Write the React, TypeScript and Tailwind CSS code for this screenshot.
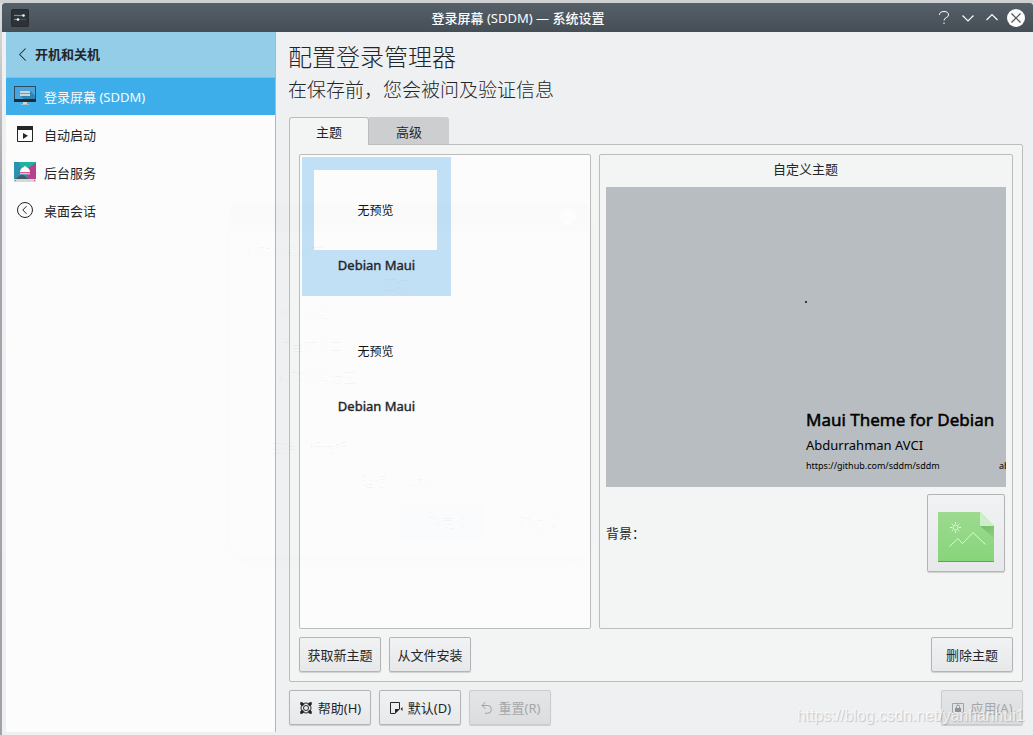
import React from 'react';
import { ChevronLeft } from 'lucide-react';

interface NavItem {
  label: string;
  icon: React.ReactNode;
  active?: boolean;
}

interface KButtonProps {
  children: React.ReactNode;
  className: string;
  icon?: React.ReactNode;
  disabled?: boolean;
}

const MonitorIcon = () => (
  <svg width="22" height="22" viewBox="0 0 22 22" shapeRendering="crispEdges">
    <rect x="0" y="0" width="22" height="16" fill="#34495a" />
    <rect x="1" y="1" width="20" height="12" fill="#45a5dc" />
    <path d="M16 5l5 5v3H9l-3-3z" fill="#3284b4" />
    <rect x="0" y="13" width="22" height="3" fill="#232b30" />
    <rect x="6" y="5" width="10" height="2" fill="#c9d6dd" />
    <rect x="6" y="7" width="10" height="1" fill="#7d99a8" />
    <rect x="6" y="8" width="10" height="2" fill="#c9d6dd" />
    <rect x="9" y="16" width="4" height="2" fill="#cfd5d8" />
    <rect x="7" y="18" width="8" height="1" fill="#a9bfcb" />
  </svg>
);

const AutostartIcon = () => (
  <svg width="22" height="22" viewBox="0 0 22 22">
    <path d="M3.5 2.5h15v15h-15z" fill="none" stroke="#232629" />
    <path d="M3 2h16v4H3z" fill="#232629" />
    <path d="M9 9l5 2.8L9 15z" fill="#232629" />
  </svg>
);

const ServicesIcon = () => (
  <svg width="22" height="22" viewBox="0 0 22 22">
    <path d="M0 0h22v18H0z" fill="#2b93b0" />
    <path d="M5 0h17L9 11z" fill="#1fb3a0" />
    <path d="M22 1v17H15L11 8z" fill="#b5428c" />
    <path d="M0 18l8-6 8 6z" fill="#455a64" />
    <path d="M6 10h10a5 5 0 00-10 0z" fill="#fcfcfc" />
    <circle cx="11" cy="5" r="1" fill="#fcfcfc" />
    <path d="M6 10.5h10" stroke="#dc5a9a" />
    <path d="M6 11.8h10" stroke="#f2e8ee" />
    <path d="M0 17h22v3H0z" fill="#d5d8da" />
    <path d="M1 18.5h1M20 18.5h1" stroke="#e05060" />
  </svg>
);

const SessionIcon = () => (
  <svg width="22" height="22" viewBox="0 0 22 22" fill="none" stroke="#232629">
    <circle cx="11" cy="10" r="7.5" />
    <path d="M12.5 6.2L8.8 10l3.7 3.8" />
  </svg>
);

const ImageIcon = () => (
  <svg width="56" height="50" viewBox="0 0 56 50">
    <defs>
      <linearGradient id="leaf" x1="0" y1="0" x2="0" y2="1">
        <stop offset="0" stopColor="#9cda90" />
        <stop offset="1" stopColor="#87d57b" />
      </linearGradient>
      <linearGradient id="fold" x1="0" y1="0" x2="1" y2="1">
        <stop offset="0" stopColor="#78b96d" />
        <stop offset="1" stopColor="#8ad07f" />
      </linearGradient>
    </defs>
    <path d="M0 0h42l14 14v36H0z" fill="url(#leaf)" />
    <path d="M42 14h14v12z" fill="url(#fold)" />
    <path d="M42 0l14 14H42z" fill="#cdeec8" />
    <path d="M0 49.5h56" stroke="#5fa356" />
    <g stroke="#e2f6de" fill="none">
      <circle cx="17.5" cy="15.5" r="2.5" />
      <path d="M17.5 10v2M17.5 19v2M12 15.5h2M21 15.5h2M13.7 11.7l1.2 1.2M20.1 18.1l1.2 1.2M21.3 11.7l-1.2 1.2M14.9 18.1l-1.2 1.2" />
      <path d="M11.5 34.5l8.5-8 4.5 5 10.5-11 12.5 12" />
    </g>
  </svg>
);

const HelpIcon = () => (
  <svg width="14" height="14" viewBox="0 0 14 14" fill="none" stroke="#232629">
    <circle cx="7" cy="7" r="5" />
    <circle cx="7" cy="7" r="2.5" />
    <path d="M1.5 1.5h2l1.5 2-1.500 1.500-2-1.500zM12.500 1.500h-2L9 3.500 10.500 5l2-1.500zM1.500 12.500h2l1.500-2L3.500 9l-2 1.500zM12.500 12.500h-2L9 10.500 10.500 9l2 1.500z" fill="#232629" strokeWidth=".6" />
  </svg>
);

const DefaultsIcon = () => (
  <svg width="14" height="14" viewBox="0 0 14 14">
    <path d="M6 12.5H1.5v-11h9V8" fill="none" stroke="#232629" />
    <path d="M6 13V8h5z" fill="#232629" />
    <path d="M13.5 6v4l-2-2z" fill="#232629" />
  </svg>
);

const ResetIcon = () => (
  <svg width="14" height="14" viewBox="0 0 14 14" fill="none" stroke="#9fa2a4">
    <path d="M5.5 1L2 4.5 5.5 8M2 4.5h5.5a3.9 3.9 0 010 7.8H5" />
  </svg>
);

const ApplyIcon = () => (
  <svg width="14" height="14" viewBox="0 0 14 14">
    <path d="M4 11.5H1.5v-9h11v9H10" fill="none" stroke="#a0a3a5" />
    <path d="M4 7h6v4H4z" fill="#8f9294" />
    <path d="M5.5 7V5.5a1.5 1.5 0 013 0V7" fill="none" stroke="#8f9294" />
  </svg>
);

const NAV: NavItem[] = [
  { label: '登录屏幕 (SDDM)', icon: <MonitorIcon />, active: true },
  { label: '自动启动', icon: <AutostartIcon /> },
  { label: '后台服务', icon: <ServicesIcon /> },
  { label: '桌面会话', icon: <SessionIcon /> },
];

const THEMES = [
  { id: 1, name: 'Debian Maui', selected: true },
  { id: 2, name: 'Debian Maui', selected: false },
];

const KButton: React.FC<KButtonProps> = ({ children, className, icon, disabled }) => (
  <button
    type="button"
    disabled={disabled}
    className={`h-[35px] shrink-0 flex items-center justify-center rounded-[2px] border text-[13px] leading-[18px] ${disabled ? 'border-[#cbcccd] bg-linear-to-b from-[#e4e5e6] to-[#dcddde] text-[#a5a8aa]' : 'border-[#b2b4b6] bg-linear-to-b from-[#f1f2f3] to-[#e7e8ea] text-[#232629]'} shadow-[0_1px_1px_rgba(0,0,0,0.15)] ${className}`}
  >
    {icon}
    <span className="whitespace-nowrap">{children}</span>
  </button>
);

const TitleBar = () => (
  <header className="h-[29px] shrink-0 flex items-center rounded-t-[3px] bg-linear-to-b from-[#566069] to-[#454e55] text-[#fcfcfc]">
    <svg className="ml-[9px]" width="18" height="18" viewBox="0 0 18 18">
      <rect x=".5" y=".5" width="17" height="17" rx="1" fill="#2d3236" stroke="#262b2f" />
      <path d="M3 6.5h9" stroke="#4c9cc4" strokeWidth="1.2" />
      <path d="M7 10.5h8" stroke="#4d5257" strokeWidth="1.2" />
      <path d="M3 10.5h4" stroke="#4c9cc4" strokeWidth="1.2" />
      <circle cx="12.5" cy="6.5" r="1.3" fill="#fcfcfc" />
      <circle cx="7" cy="10.5" r="1.3" fill="#fcfcfc" />
    </svg>
    <h1 className="flex-1 pl-[69px] text-center text-[13px] leading-[18px]">
      <b className="font-medium">登录屏幕</b> (SDDM) — <b className="font-medium">系统设置</b>
    </h1>
    <div className="mr-[7px] flex items-center">
      <svg className="mr-[12px]" width="12" height="16" viewBox="0 0 12 16" fill="none" stroke="#fcfcfc">
        <path d="M1.5 5a4.5 3.5 0 019 0c0 2.8-4.5 2.4-4.5 5.5M6 12.5V14" />
      </svg>
      <svg className="mr-[12px]" width="12" height="16" viewBox="0 0 12 16" fill="none" stroke="#fcfcfc" strokeWidth="1.2">
        <path d="M.5 5.5L6 11l5.5-5.5" />
      </svg>
      <svg className="mr-[8px]" width="12" height="16" viewBox="0 0 12 16" fill="none" stroke="#fcfcfc" strokeWidth="1.2">
        <path d="M.5 10L6 4.5l5.5 5.5" />
      </svg>
      <svg width="20" height="20" viewBox="0 0 20 20">
        <circle cx="10" cy="10" r="9" fill="#fcfcfc" />
        <path d="M5.5 5.5l9 9M14.5 5.5l-9 9" stroke="#465058" strokeWidth="1.2" />
      </svg>
    </div>
  </header>
);

const Sidebar = () => (
  <aside className="ml-1 mb-[3px] w-[270px] shrink-0 border-r border-[#b3b5b6] bg-[#fcfcfc]">
    <div className="h-[46px] flex items-center border-b border-[#a9b3b8] bg-[#94cde7] pl-[5px] text-[13px] font-bold text-[#232629]">
      <ChevronLeft size={23} strokeWidth={1.1} />
      <span className="ml-px -mt-px leading-[18px]">开机和关机</span>
    </div>
    <nav>
      {NAV.map(item => (
        <div key={item.label} className={`flex items-center pl-2 text-[13px] leading-[18px] ${item.active ? 'h-[37px] bg-[#3daee9] text-[#fcfcfc]' : 'h-[38px] pt-[2px] text-[#232629]'}`}>
          {item.icon}
          <span className="ml-2">{item.label}</span>
        </div>
      ))}
    </nav>
  </aside>
);

const ThemeList = () => (
  <section className="w-[292px] shrink-0 rounded-[2px] border border-[#babcbd] bg-[#fcfcfc] p-0.5">
    {THEMES.map(t => (
      <div key={t.id} className={`mb-0.5 h-[139px] w-[149px] pt-[13px] pl-3 ${t.selected ? 'bg-[#c2e0f5]' : ''}`}>
        <div className="h-20 w-[123px] flex items-center justify-center bg-[#fcfcfc] pt-[2px] text-[12px] leading-[18px] text-[#111]">无预览</div>
        <p className="mt-[6px] w-[125px] text-center text-[13px] leading-[18px] text-[#232629] [-webkit-text-stroke:0.4px_#232629]">{t.name}</p>
      </div>
    ))}
  </section>
);

const ThemeDetails = () => (
  <section className="w-[414px] shrink-0 rounded-[2px] border border-[#babcbd] px-1.5">
    <h3 className="h-8 pt-[5px] pr-px text-center text-[13px] leading-[18px]">自定义主题</h3>
    <div className="h-[300px] w-[400px] flex flex-col overflow-hidden bg-[#b8bdc1] pl-[200px] text-black">
      <div className="mt-[114px] -ml-px h-[2px] w-[2px] bg-black/70" />
      <p className="mt-[105px] whitespace-nowrap text-[17px] leading-6 [-webkit-text-stroke:0.5px_#000]">Maui Theme for Debian</p>
      <p className="mt-[4px] text-[13px] leading-[18px]">Abdurrahman AVCI</p>
      <p className="mt-[5px] flex whitespace-nowrap text-[9px] leading-[14px]">
        <span className="w-[193px] shrink-0">https://github.com/sddm/sddm</span>
        <span>ab</span>
      </p>
    </div>
    <div className="mt-[7px] flex items-center justify-between pr-px">
      <span className="text-[13px] leading-[18px]">背景：</span>
      <button type="button" className="h-[78px] w-[78px] flex items-center justify-center pt-[8px] rounded-[2px] border border-[#b2b4b6] bg-linear-to-b from-[#f1f2f3] to-[#e7e8ea] shadow-[0_1px_1px_rgba(0,0,0,0.15)]">
        <ImageIcon />
      </button>
    </div>
  </section>
);

// fading screenshot dialog, almost fully transparent
const FadingDialog = () => (
  <div className="pointer-events-none absolute left-[231px] top-[203px] h-[352px] w-[357px] rounded-t-[3px] shadow-[0_6px_24px_rgba(0,0,0,0.012)]">
    <div className="h-[28px] bg-black/[0.008]" />
    <svg className="absolute left-[328px] top-[5px]" width="18" height="18" viewBox="0 0 18 18">
      <circle cx="9" cy="9" r="8.5" fill="#fff" opacity=".5" />
    </svg>
    <div className="px-[15px] pt-3 text-[13px] leading-[18px] text-black/[0.03]">
      <p>抓取屏幕截图</p>
      <p className="mt-[14px] pl-[137px]">区域</p>
      <p className="mt-[13px] pl-8">整个屏幕</p>
      <p className="mt-[13px] pl-8">仅当前窗口</p>
      <p className="mt-[13px] pl-8">截取屏幕选区</p>
      <p className="mt-[52px] pl-6">包括鼠标光标</p>
      <p className="mt-4 flex gap-4 pl-[115px]"><span>延迟:</span><span>0 秒</span></p>
      <p className="mt-[15px] flex">
        <span className="ml-[154px] h-[34px] w-[83px] bg-[#3daee9]/[0.015] pt-[8px] pl-7">确定(O)</span>
        <span className="ml-[36px] pt-[8px]">取消(C)</span>
      </p>
    </div>
  </div>
);

export default function App() {
  return (
    <div className="relative h-[735px] w-[1033px] overflow-hidden bg-[#eff0f1] font-['Noto_Sans','Noto_Sans_CJK_SC',sans-serif] text-[#232629]">
      <div className="h-full flex border-t-[3px] border-[#cfd0d2]">
        <div className="w-0.5 shrink-0 bg-linear-to-b from-[#dcddde] via-[#a5a6a9] via-25% to-[#a1a2a5]" />
        <div className="flex-1 min-w-0 flex flex-col">
          <TitleBar />
          <div className="flex-1 min-h-0 flex">
            <Sidebar />
            <main className="flex-1 min-w-0 pl-[13px] pr-[10px]">
              <h2 className="-ml-px mt-[7px] text-[24px] font-light leading-9">配置登录管理器</h2>
              <p className="-ml-px mt-px text-[19px] font-light leading-[28px]">在保存前，您会被问及验证信息</p>
              <div className="mt-[13px] flex h-[28px]">
                <div className="relative z-10 w-20 rounded-t-[3px] border border-b-0 border-[#babcbd] bg-[#f3f5f4] pt-[5px] text-center text-[13px] leading-[18px]">主题</div>
                <div className="mb-px w-20 rounded-tr-[3px] bg-[#cdced0] pt-[6px] text-center text-[13px] leading-[18px]">高级</div>
              </div>
              <div className="-mt-px h-[538px] rounded-[2px] rounded-tl-none border border-[#babcbd] bg-[#f3f5f4] px-[9px] pt-[9px]">
                <div className="flex h-[475px] gap-2">
                  <ThemeList />
                  <ThemeDetails />
                </div>
                <div className="mt-2 flex gap-2">
                  <KButton className="w-[82px]">获取新主题</KButton>
                  <KButton className="w-[82px]">从文件安装</KButton>
                  <KButton className="ml-auto w-[82px]">删除主题</KButton>
                </div>
              </div>
              <div className="mt-2 flex gap-2">
                <KButton className="w-[82px] gap-[5px]" icon={<HelpIcon />}>帮助(H)</KButton>
                <KButton className="w-[82px] gap-[5px]" icon={<DefaultsIcon />}>默认(D)</KButton>
                <KButton className="w-[82px] gap-[5px]" icon={<ResetIcon />} disabled>重置(R)</KButton>
                <KButton className="ml-auto w-[82px] gap-[5px]" icon={<ApplyIcon />} disabled>应用(A)</KButton>
              </div>
            </main>
          </div>
        </div>
      </div>
      <FadingDialog />
      <span className="absolute left-[797px] top-[706px] whitespace-nowrap font-['Liberation_Sans',sans-serif] text-[15.8px] leading-5 text-white/70 [text-shadow:1px_1px_1px_rgba(0,0,0,0.18)]">https://blog.csdn.net/yanhanhui1</span>
    </div>
  );
}
